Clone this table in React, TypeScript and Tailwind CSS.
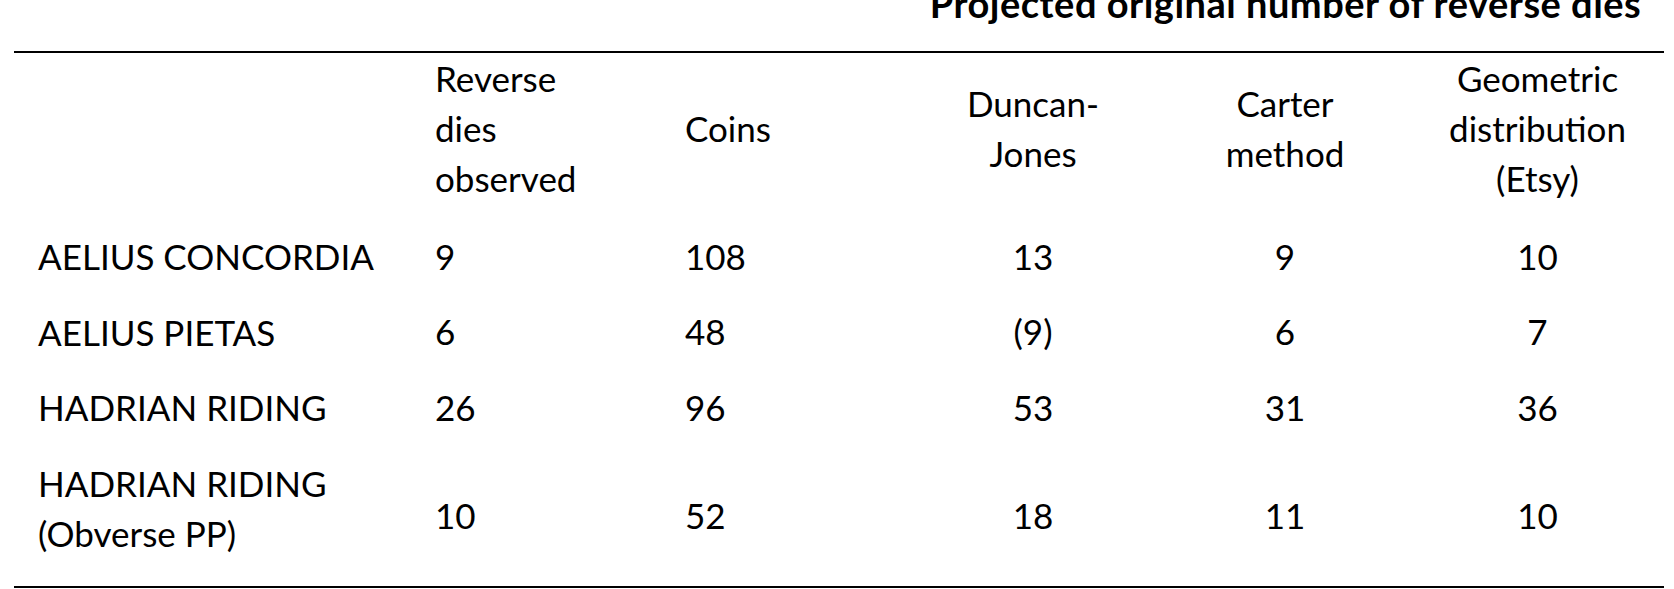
import React from "react";

type Row = {
  name: string[];
  observed: string;
  coins: string;
  duncan: string;
  carter: string;
  geometric: string;
};

const rows: Row[] = [
  { name: ["AELIUS CONCORDIA"], observed: "9", coins: "108", duncan: "13", carter: "9", geometric: "10" },
  { name: ["AELIUS PIETAS"], observed: "6", coins: "48", duncan: "(9)", carter: "6", geometric: "7" },
  { name: ["HADRIAN RIDING"], observed: "26", coins: "96", duncan: "53", carter: "31", geometric: "36" },
  { name: ["HADRIAN RIDING", "(Obverse PP)"], observed: "10", coins: "52", duncan: "18", carter: "11", geometric: "10" },
];

const Lines = ({ lines }: { lines: string[] }) => (
  <>
    {lines.map((l, i) => (
      <div key={i}>{l}</div>
    ))}
  </>
);

export default function App() {
  return (
    <div className="min-h-[589px] w-full overflow-hidden bg-white pl-[14px] text-black">
      <table
        className="mt-[-22px] w-[1650px] table-fixed border-collapse text-[35px] leading-[50px]"
        style={{ fontFamily: "Lato, 'Open Sans', sans-serif" }}
      >
        <colgroup>
          <col className="w-[397px]" />
          <col className="w-[250px]" />
          <col className="w-[246px]" />
          <col className="w-[252px]" />
          <col className="w-[252px]" />
          <col className="w-[253px]" />
        </colgroup>
        <thead>
          <tr className="border-b-2 border-black">
            <th colSpan={3} />
            <th
              colSpan={3}
              className="pb-[23px] text-center text-[38px] font-bold tracking-[0.5px] whitespace-nowrap"
            >
              Projected original number of reverse dies
            </th>
          </tr>
          <tr>
            <th className="pt-0 pb-[15px] align-top font-normal" />
            <th className="pt-0 pl-[24px] text-left align-top font-normal">
              <Lines lines={["Reverse", "dies", "observed"]} />
            </th>
            <th className="pt-[50px] pl-[24px] text-left align-top font-normal">Coins</th>
            <th className="pt-[25px] text-center align-top font-normal">
              <Lines lines={["Duncan-", "Jones"]} />
            </th>
            <th className="pt-[25px] text-center align-top font-normal">
              <Lines lines={["Carter", "method"]} />
            </th>
            <th className="pt-0 pb-[15px] text-center align-top font-normal">
              <Lines lines={["Geometric", "distribution", "(Etsy)"]} />
            </th>
          </tr>
        </thead>
        <tbody>
          {rows.map((r, i) => (
            <tr key={i} className={i === rows.length - 1 ? "border-b-2 border-black" : ""}>
              <td className={`pl-[24px] pt-[13px] align-middle ${i === rows.length - 1 ? "pb-[28px]" : "pb-[12.5px]"}`}>
                <Lines lines={r.name} />
              </td>
              <td className="pl-[24px] align-middle">{r.observed}</td>
              <td className="pl-[24px] align-middle">{r.coins}</td>
              <td className="text-center align-middle">{r.duncan}</td>
              <td className="text-center align-middle">{r.carter}</td>
              <td className="text-center align-middle">{r.geometric}</td>
            </tr>
          ))}
        </tbody>
      </table>
    </div>
  );
}
